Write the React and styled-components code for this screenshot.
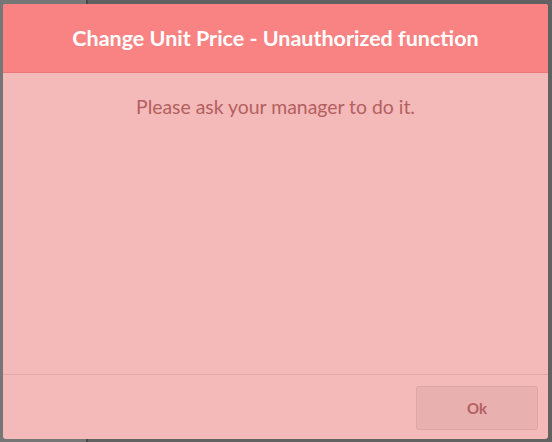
import React from "react";
import styled, { createGlobalStyle } from "styled-components";

const Global = createGlobalStyle`
  html, body { margin: 0; padding: 0; }
  body {
    width: 552px;
    height: 442px;
    overflow: hidden;
    background: #636363;
    font-family: Lato, "Open Sans", sans-serif;
  }
`;

const Backdrop = styled.div`
  position: relative;
  width: 552px;
  height: 442px;
  background: linear-gradient(to right, #767676 0, #767676 86px, #4a4a4a 86px, #4a4a4a 88px, #626262 88px);
  padding: 4px 4px 3px 3px;
  box-sizing: border-box;
`;

const Dialog = styled.div`
  width: 545px;
  height: 435px;
  background: #f4b9b9;
  border-radius: 3px;
  overflow: hidden;
  display: flex;
  flex-direction: column;
`;

const Header = styled.div`
  height: 68px;
  flex: none;
  background: #f98383;
  border-bottom: 1px solid #eb7777;
  display: flex;
  align-items: center;
  justify-content: center;
`;

const Title = styled.h1`
  margin: 0;
  color: #ffffff;
  font-size: 21.5px;
  font-weight: 700;
  letter-spacing: 0;
`;

const Body = styled.div`
  flex: 1;
  display: flex;
  justify-content: center;
  padding-top: 22px;
  border-bottom: 1px solid #e4a7a7;
`;

const Message = styled.p`
  margin: 0;
  color: #b3605f;
  font-size: 19.4px;
  line-height: 24px;
`;

const Footer = styled.div`
  height: 64px;
  flex: none;
  display: flex;
  justify-content: flex-end;
  align-items: flex-start;
  padding: 11px 10px 0 0;
  box-sizing: border-box;
`;

const Button = styled.button`
  width: 122px;
  height: 44px;
  background: #e9b0b0;
  border: 1px solid #dfa6a6;
  border-radius: 3px;
  color: #b3605f;
  font-family: Lato, "Open Sans", sans-serif;
  font-size: 15px;
  font-weight: 700;
  cursor: pointer;
`;

export default function App() {
  return (
    <>
      <Global />
      <Backdrop>
        <Dialog>
          <Header>
            <Title>Change Unit Price - Unauthorized function</Title>
          </Header>
          <Body>
            <Message>Please ask your manager to do it.</Message>
          </Body>
          <Footer>
            <Button>Ok</Button>
          </Footer>
        </Dialog>
      </Backdrop>
    </>
  );
}
